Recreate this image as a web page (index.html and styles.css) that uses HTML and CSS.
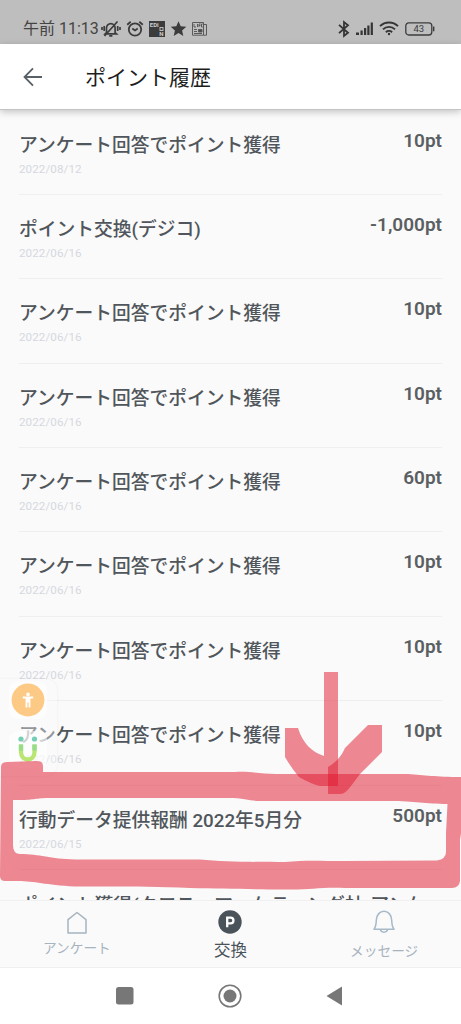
FILE: index.html
```html
<!DOCTYPE html>
<html lang="ja">
<head>
<meta charset="utf-8">
<title>ポイント履歴</title>
<link rel="stylesheet" href="styles.css">
</head>
<body>
<div class="screen">
  <div class="status">
    <span class="clock">午前 11:13</span>
    <div class="status-left">
      <svg width="20" height="18" viewBox="0 0 20 18" fill="none" stroke="#3c3c3c" stroke-width="1.7"><path d="M5.5 12.500V8a4.300 4.300 0 0 1 8.600 0v4.500l1.400 1.300H4.200zM8.200 15.800h3.200M16.500 1.500 3.500 16M3.200 6v5M1 7v3M16.700 6v5M19 7v3"/></svg>
      <svg width="18" height="18" viewBox="0 0 18 18" fill="none" stroke="#3c3c3c" stroke-width="1.8"><circle cx="9" cy="9.500" r="6.200"/><path d="m1.200 4.800 3.500-3M16.800 4.800l-3.500-3M6.300 8.500 9 10.500l2.700-2"/></svg>
      <svg width="16" height="16" viewBox="0 0 16 16"><path fill="#3c3c3c" d="M0 0h16v16H0z"/><text x=".8" y="6.200" class="micro">EDi</text><text x="10.300" y="15" class="micro">N</text><rect x="11" y="6.500" width="3" height="3" fill="none" stroke="#bbb"/></svg>
      <svg width="17" height="16" viewBox="0 0 16 16"><path fill="#3c3c3c" d="m8 .2 2.200 5.100 5.600.5-4.200 3.700 1.200 5.500L8 12.100 3.200 15l1.200-5.500L.2 5.800l5.600-.5z"/></svg>
      <svg width="15" height="14" viewBox="0 0 15 14" fill="none" stroke="#5a5a5a"><path d="M.5.5h11v12.700H.5zM11.500 2.500h3v10.700h-3M2 2v3h2M5.500 2v3M7 5V2h1.500M7 3.500h1.500M10.700 2H9.500v3h1.200M2 7.500h3M2 9.500h3M2 11.500h8"/><path fill="#4b4b4b" d="M6.500 7.500H10v2.500H6.500z"/></svg>
    </div>
    <div class="status-right">
      <svg width="12" height="18" viewBox="0 0 12 18" fill="none" stroke="#353535" stroke-width="1.8"><path d="m1 4.800 9 8L6 16V2l4 3.200-9 8"/></svg>
      <svg class="signal" width="18" height="14" viewBox="0 0 18 14" fill="#353535"><path d="M0 10.500h3V13H0zM4.500 8.500h2.200V13H4.500zM8 6h2.200v7H8zM11.300 3.500h2.200V13h-2.200zM14.700.5h2.200V13h-2.200z"/></svg>
      <svg class="wifi" width="20" height="15" viewBox="0 0 20 15" fill="none" stroke="#353535" stroke-width="1.900"><path d="M1 5.200a12.700 12.700 0 0 1 18 0M4 8.400a8.500 8.500 0 0 1 12 0M6.900 11.200a4.500 4.500 0 0 1 6.200 0"/><circle cx="10" cy="13" r="1.200" fill="#353535" stroke="none"/></svg>
      <svg class="battery" width="30" height="14" viewBox="0 0 30 14"><rect x=".8" y=".8" width="26" height="12.200" rx="3" fill="none" stroke="#3c3c3c" stroke-width="1.300"/><path fill="#3c3c3c" d="M28 4.500h1.400v4.800H28z"/><text x="13.800" y="10.300" text-anchor="middle" class="level">43</text></svg>
    </div>
  </div>
  <header class="bar">
    <svg width="20" height="20" viewBox="0 0 20 20" fill="none" stroke="#596166" stroke-width="1.800"><path d="M19 10H1.800M10 1.300 1.500 10l8.500 8.700"/></svg>
    <h1>ポイント履歴</h1>
  </header>
  <main class="list">
    <div class="row"><div><p class="name">アンケート回答でポイント獲得</p><p class="date">2022/08/12</p></div><b class="pt">10pt</b></div>
    <div class="row"><div><p class="name">ポイント交換(デジコ)</p><p class="date">2022/06/16</p></div><b class="pt">-1,000pt</b></div>
    <div class="row"><div><p class="name">アンケート回答でポイント獲得</p><p class="date">2022/06/16</p></div><b class="pt">10pt</b></div>
    <div class="row"><div><p class="name">アンケート回答でポイント獲得</p><p class="date">2022/06/16</p></div><b class="pt">10pt</b></div>
    <div class="row"><div><p class="name">アンケート回答でポイント獲得</p><p class="date">2022/06/16</p></div><b class="pt">60pt</b></div>
    <div class="row"><div><p class="name">アンケート回答でポイント獲得</p><p class="date">2022/06/16</p></div><b class="pt">10pt</b></div>
    <div class="row"><div><p class="name">アンケート回答でポイント獲得</p><p class="date">2022/06/16</p></div><b class="pt">10pt</b></div>
    <div class="row"><div><p class="name">アンケート回答でポイント獲得</p><p class="date">2022/06/16</p></div><b class="pt">10pt</b></div>
    <div class="row"><div><p class="name">行動データ提供報酬 2022年5月分</p><p class="date">2022/06/15</p></div><b class="pt">500pt</b></div>
    <div class="row last"><div><p class="name">ポイント獲得(クロス・マーケティング社-アンケ</p></div></div>
  </main>
  <nav class="tabs">
    <div class="tab"><svg width="22" height="24" viewBox="0 0 22 24" fill="none" stroke="#a7b4c0" stroke-width="1.500"><path d="M2 8.600 11 1.500l9 7.100V22H2z" stroke-linejoin="round"/></svg><span>アンケート</span></div>
    <div class="tab active"><svg width="24" height="24" viewBox="0 0 24 24"><circle cx="12" cy="12" r="11.700" fill="#4a535a"/><path fill="none" stroke="#fff" stroke-width="2.300" d="M9.200 17.300V7.600h3.400a2.800 2.800 0 0 1 0 5.700H9.200"/></svg><span>交換</span></div>
    <div class="tab message"><svg width="24" height="24" viewBox="0 0 24 24" fill="none" stroke="#a7b9c8" stroke-width="1.500"><path d="M2 19.300c2-2.500 2.200-5 2.300-9C4.500 4.500 8 1.300 12 1.300s7.500 3.200 7.700 9c.1 4 .3 6.500 2.300 9zM8.500 19.500c.4 3.500 6.600 3.500 7 0" stroke-linejoin="round"/></svg><span>メッセージ</span></div>
  </nav>
  <div class="system">
    <svg width="18" height="18"><rect width="17.500" height="17.500" rx="2.500" fill="#777"/></svg>
    <svg width="24" height="24"><circle cx="12" cy="12" r="10.800" fill="none" stroke="#777" stroke-width="1.600"/><circle cx="12" cy="12" r="6.500" fill="#777"/></svg>
    <svg width="17" height="20"><path d="M.5 10 16 .5v19z" fill="#777"/></svg>
  </div>
  <div class="float">
    <div class="app"><svg width="34" height="34" viewBox="0 0 34 34"><circle cx="17" cy="17" r="16.400" fill="#fdca85"/><circle cx="17" cy="11.400" r="1.800" fill="#fff"/><path d="M11.800 14.500h10.400M17 14v5.500M15.500 15v9.500M18.500 15v9.500" stroke="#fff" stroke-width="1.800" fill="none"/></svg></div>
    <div class="app"><svg width="24" height="30" viewBox="0 0 24 30"><circle cx="5" cy="4" r="2.600" fill="#75cfb4"/><circle cx="18.500" cy="4" r="2.600" fill="#75cfb4"/><path d="M5 9.500V17c0 10 13.500 10 13.500 0V9.500" fill="none" stroke="#b9e673" stroke-width="4.300"/><path d="M5 9.500v6M18.500 9.500v6" stroke="#96dc8b" stroke-width="4.300"/></svg></div>
  </div>
  <svg class="marks" width="461" height="1024" viewBox="0 0 461 1024" fill="#e0162c" fill-opacity=".5">
    <path fill-rule="evenodd" d="M1 767Q1 762 7 762L37 761Q43 761 43 766V772H235C250 771 260 774 276 774H408C425 775 435 777 461 777V833L460 840V881Q459 888 452 888H345C320 887 310 890 285 889.500C250 889 225 889 190 888C145 886 110 886.500 75 886.500C45 885 35 881 18 881H5Q0 881 0 876ZM13 800V845Q13 854 20 854C40 854 50 859 75 859.500H200C225 862 260 862 285 862C305 860 320 861 345 861L437 860.500Q446 859 446 852V833L447.500 804C425 804 415 801 390 801H260C250 801 245 798 228 798H50C35 798 35 800 20 800Z"/>
    <path d="M324 672H338V786H320Q311 784 299 777Q292 769 285 757V728H298C303 744 312 752 324 756Z"/>
    <path d="M368 725H382V752L360 774L351 786Q345 794 341 794H328V767Q340 760 345 748Z"/>
  </svg>
</div>
</body>
</html>
```
FILE: styles.css
```css
* { box-sizing: border-box; }
body { margin: 0; font-family: Roboto, "Noto Sans CJK JP", sans-serif; }
h1, p { margin: 0; }
svg { display: block; flex: none; }
.screen { position: relative; width: 461px; height: 1024px; display: flex; flex-direction: column; overflow: hidden; background: #fff; }
.status { height: 44px; flex: none; display: flex; align-items: center; padding: 13px 26px 0 23px; background: #bebebe; color: #444; }
.clock { width: 78px; flex: none; font-size: 16px; line-height: 20px; white-space: nowrap; }
.status-left { display: flex; align-items: center; gap: 5px; }
.status-right { display: flex; align-items: center; margin-left: auto; }
.signal { margin-left: 6px; }
.wifi { margin-left: 5px; }
.battery { margin-left: 6px; }
.micro { font: bold 6px Roboto, sans-serif; fill: #ccc; }
.level { font: 400 9.5px Roboto, sans-serif; fill: #3c3c3c; }
.bar { position: relative; height: 66px; flex: none; display: flex; align-items: center; gap: 42px; padding-left: 23px; background: #fff; border-bottom: 1px solid #c4c4c4; box-shadow: 0 2px 7px rgba(0, 0, 0, .22); }
.bar h1 { font-size: 21px; font-weight: 400; line-height: 30px; color: #1d1d1d; padding-top: 3px; }
.list { height: 790px; flex: none; overflow: hidden; padding: .5px 19px 0; background: #fafafa; }
.row { height: 84.4px; display: flex; justify-content: space-between; padding-top: 20px; border-bottom: 1px solid #eeeff0; color: #50565b; }
.name { font-size: 18.75px; font-weight: 500; line-height: 28px; padding-top: 1px; white-space: nowrap; }
.last .name { padding-top: 2px; letter-spacing: .12px; }
.date { font-size: 11.6px; line-height: 16px; margin-top: 1px; letter-spacing: .1px; color: #d5d8df; }
.pt { font-size: 19px; font-weight: 600; line-height: 20px; color: #5b5f62; }
.tabs { height: 68px; flex: none; display: grid; grid-template-columns: repeat(3, 1fr); background: #fafafa; border-top: 1px solid #f0f0f0; border-bottom: 1px solid #f0f0f0; }
.tab { display: flex; flex-direction: column; align-items: center; padding-top: 10px; font-size: 13.7px; line-height: 20px; color: #a7b4c0; }
.tab span { margin-top: 3px; }
.active { padding-top: 9px; font-size: 16.5px; color: #4a535a; }
.active span { margin-top: 7px; }
.message { padding-top: 9px; }
.message span { margin-top: 7px; }
.system { height: 56px; flex: none; display: flex; align-items: center; justify-content: center; gap: 84px; padding-right: 2px; background: #fff; }
.float { position: absolute; left: 0; top: 679px; width: 57px; height: 97px; display: flex; flex-direction: column; gap: 12px; padding: 2px 9px; border-radius: 0 12px 12px 0; background: rgba(250, 250, 250, .4); box-shadow: 0 0 3px rgba(0, 0, 0, .06); }
.app { width: 38px; height: 38px; flex: none; display: flex; align-items: center; justify-content: center; border-radius: 9px; background: rgba(255, 255, 255, .55); }
.marks { position: absolute; left: 0; top: 0; }
```
